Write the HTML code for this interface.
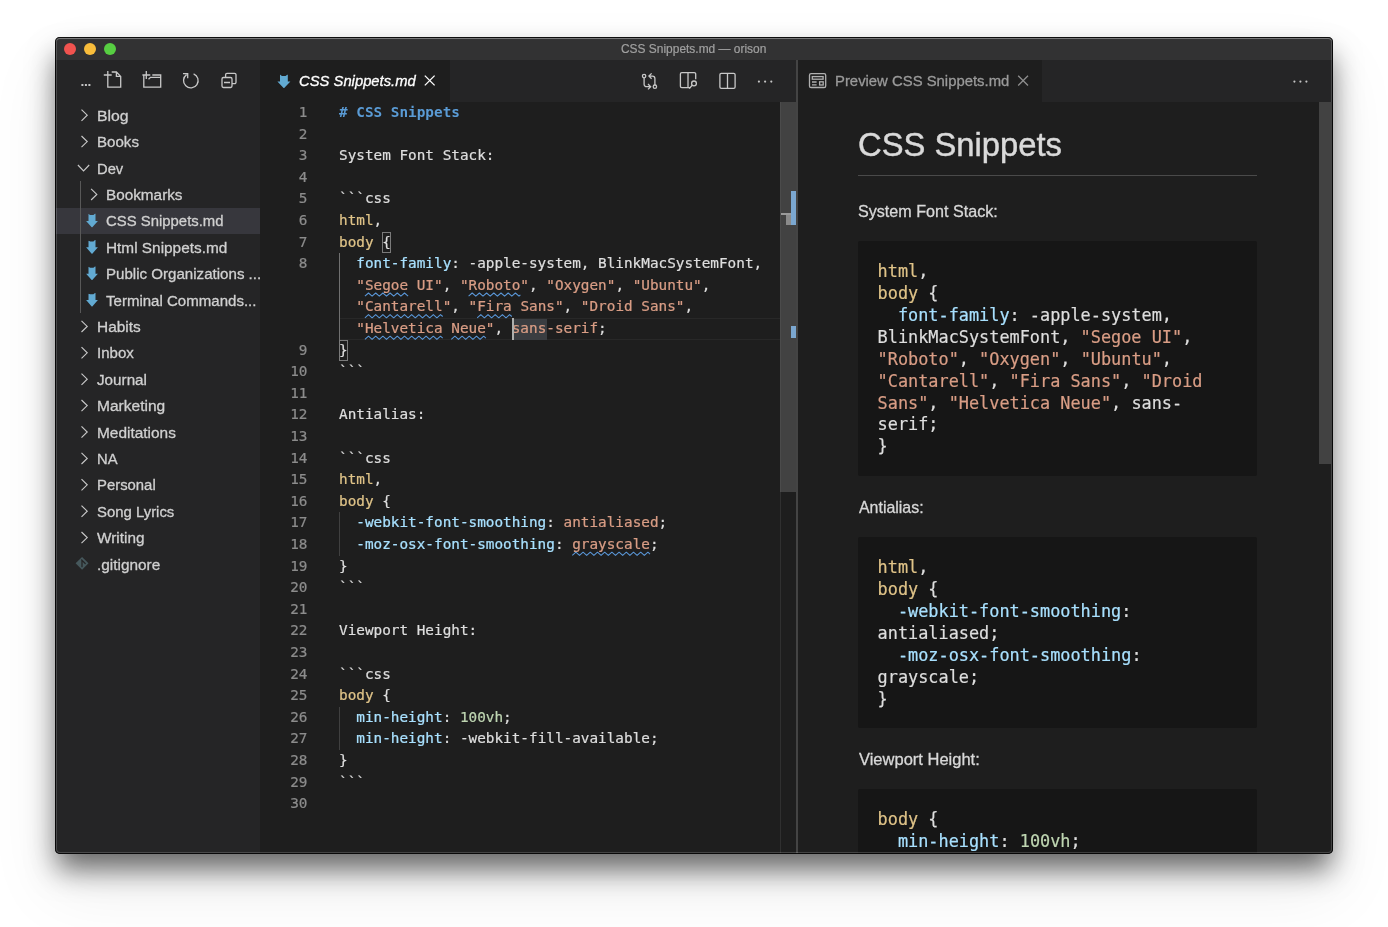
<!DOCTYPE html>
<html lang="en">
<head>
<meta charset="utf-8">
<title>CSS Snippets.md — orison</title>
<style>
*{box-sizing:border-box;margin:0;padding:0}
html,body{width:1388px;height:927px;overflow:hidden;background:#fff}
body{position:relative;font-family:"Liberation Sans",sans-serif;color:#ccc}
#win{position:absolute;left:55px;top:37px;width:1278px;height:817px;background:#1e1e1e;border-radius:5px;
 box-shadow:0 17px 29px -2px rgba(0,0,0,.58),0 33px 69px 4px rgba(0,0,0,.07);}
#clip{position:absolute;inset:0;border-radius:5px;overflow:hidden}
#o{position:absolute;left:-55px;top:-37px;width:1388px;height:927px;will-change:transform}
.a{position:absolute}
svg{position:absolute;overflow:visible}
.ui{font-size:15.2px;white-space:nowrap;line-height:26.4px;height:26.4px;color:#d0d0d0;-webkit-text-stroke:0.3px}
#titlebar{left:55px;top:37px;width:1278px;height:23px;background:#323233}
#title{left:55px;width:1278px;top:38.1px;height:23px;line-height:23px;text-align:center;font-size:12.6px;color:#a0a0a0;-webkit-text-stroke:0.2px;white-space:nowrap}
.tl{width:12.3px;height:12.3px;border-radius:50%;top:42.65px}
#sidebar{left:55px;top:60px;width:205px;height:794px;background:#252526}
#sel{left:55px;top:207.6px;width:205px;height:26.4px;background:#37373d}
#guide{left:80px;top:181px;width:1px;height:132.4px;background:#585858}
.st{fill:none;stroke:#c8c8c8;stroke-width:1.3}
#ed{left:260px;top:60px;width:537px;height:794px;background:#1e1e1e}
#tabs1{left:260px;top:60px;width:537px;height:42px;background:#252526}
#tab1{left:260px;top:60px;width:190px;height:42px;background:#1e1e1e}
#divider{left:796px;top:60px;width:2px;height:794px;background:#444}
.code{font-family:"DejaVu Sans Mono","Liberation Mono",monospace;font-size:14.35px;white-space:pre;color:#dedede;-webkit-text-stroke:0.22px;height:21.6px;line-height:21.6px}
.ln{left:260px;width:47.5px;text-align:right;color:#8c8c8c}
.cl{left:339px}
.s{color:#d99d85}.p{color:#a8e0fe}.y{color:#dfc388}.n{color:#bfd6b2}.h{color:#5a9bd5;font-weight:bold;-webkit-text-stroke:0}
.bm{width:9.6px;height:20.6px;border:1px solid #7a7a7a;margin-left:-0.5px;margin-top:-0.6px}
#pv{left:798px;top:60px;width:535px;height:794px;background:#1e1e1e}
#tabs2{left:798px;top:60px;width:535px;height:42px;background:#252526}
#tab2{left:798px;top:60px;width:244px;height:42px;background:#1e1e1e}
#pvc{left:0;top:0;width:1388px;height:854px;overflow:hidden}
#h1{font-size:33.6px;font-weight:normal;line-height:42px;height:42px;color:#dadada;-webkit-text-stroke:0.45px;white-space:nowrap;transform-origin:0 50%}
.pp{font-size:16.6px;line-height:26px;height:26px;color:#d8d8d8;-webkit-text-stroke:0.3px;white-space:nowrap;transform-origin:0 50%}
.pre{background:#161616;border-radius:2px;padding:20.8px 19.6px 19px;font-family:"DejaVu Sans Mono","Liberation Mono",monospace;font-size:16.86px;line-height:21.87px;color:#dedede;-webkit-text-stroke:0.2px;white-space:pre}
.sb{transform-origin:0 50%}
#frame{position:absolute;inset:0;border-radius:5px;pointer-events:none;box-shadow:inset 0 0 0 1px rgba(0,0,0,.88),inset 0 2px 0 0 rgba(255,255,255,.22),inset 0 0 0 2px rgba(255,255,255,.17)}
</style>
</head>
<body>
<div id="win"><div id="clip">
<div id="o">
<div id="titlebar" class="a"></div>
<div id="title" class="a"><span id="tt" style="display:inline-block;transform:scaleX(0.9487)">CSS Snippets.md — orison</span></div>
<div class="a tl" style="left:63.85px;background:#f1534f"></div>
<div class="a tl" style="left:83.9px;background:#f9bd3b"></div>
<div class="a tl" style="left:103.85px;background:#57ce42"></div>
<div id="sidebar" class="a"></div>
<div id="sel" class="a"></div>
<div id="guide" class="a"></div>
<svg class="st" style="left:0;top:0" width="1388" height="927" viewBox="0 0 1388 927">
<g fill="#c5c5c5" stroke="none"><rect x="81.4" y="84" width="2" height="2"/><rect x="84.9" y="84" width="2" height="2"/><rect x="88.4" y="84" width="2" height="2"/></g>
<path d="M103.8 75h7.9M107.8 71v8M107.8 79v8.2h12.9v-10.8l-4.3-4.4h-4.7M116.4 72v4.4h4.3"/>
<path d="M142.4 75h7.9M146.3 71v8M143.8 75.6v11.6h16.9v-12.2h-8.4M160.7 77.3h-10.2l-2 1.9"/>
<path d="M183 73.6h4.7v4.6M186.6 74.6a7.3 7.3 0 1 0 7 -0.8"/>
<rect x="222" y="77.5" width="10" height="10" rx="1.4"/><path d="M225.6 77.5v-2.8a1.4 1.4 0 0 1 1.4-1.4h7.6a1.4 1.4 0 0 1 1.4 1.4v7.6a1.4 1.4 0 0 1-1.4 1.4h-2.6M224 82.5h6"/>
<path stroke-width="1.15" d="M81.5 109.6l5.7 5.6l-5.7 5.6"/>
<path stroke-width="1.15" d="M81.5 136.0l5.7 5.6l-5.7 5.6"/>
<path stroke-width="1.15" d="M77.9 165.0l5.65 5.9l5.65-5.9"/>
<path stroke-width="1.15" d="M91.1 188.8l5.7 5.6l-5.7 5.6"/>
<path fill="#62aad2" stroke="none" d="M88.39999999999999 213.7l1.6 1.3h3.4l1.6-1.3l0.5 0v7.2h2.4l-5.6 6.4h-0.6l-5.6-6.4h2.4v-7.2z"/>
<path fill="#62aad2" stroke="none" d="M88.39999999999999 240.1l1.6 1.3h3.4l1.6-1.3l0.5 0v7.2h2.4l-5.6 6.4h-0.6l-5.6-6.4h2.4v-7.2z"/>
<path fill="#62aad2" stroke="none" d="M88.39999999999999 266.5l1.6 1.3h3.4l1.6-1.3l0.5 0v7.2h2.4l-5.6 6.4h-0.6l-5.6-6.4h2.4v-7.2z"/>
<path fill="#62aad2" stroke="none" d="M88.39999999999999 292.9l1.6 1.3h3.4l1.6-1.3l0.5 0v7.2h2.4l-5.6 6.4h-0.6l-5.6-6.4h2.4v-7.2z"/>
<path stroke-width="1.15" d="M81.5 320.8l5.7 5.6l-5.7 5.6"/>
<path stroke-width="1.15" d="M81.5 347.2l5.7 5.6l-5.7 5.6"/>
<path stroke-width="1.15" d="M81.5 373.6l5.7 5.6l-5.7 5.6"/>
<path stroke-width="1.15" d="M81.5 400.0l5.7 5.6l-5.7 5.6"/>
<path stroke-width="1.15" d="M81.5 426.4l5.7 5.6l-5.7 5.6"/>
<path stroke-width="1.15" d="M81.5 452.8l5.7 5.6l-5.7 5.6"/>
<path stroke-width="1.15" d="M81.5 479.2l5.7 5.6l-5.7 5.6"/>
<path stroke-width="1.15" d="M81.5 505.6l5.7 5.6l-5.7 5.6"/>
<path stroke-width="1.15" d="M81.5 532.0l5.7 5.6l-5.7 5.6"/>
<path fill="#46585c" stroke="none" d="M82.05 556.9l6.45 6.4l-6.45 6.4l-6.45-6.4z"/><path stroke="#252526" stroke-width="1.3" stroke-linecap="round" d="M82 560.1v6.6M81.6 559.9l3.6 3.6"/>
</svg>
<div class="a ui sb" id="sb0" style="left:96.5px;top:102.8px;transform:scaleX(1.0413)">Blog</div>
<div class="a ui sb" id="sb1" style="left:96.5px;top:129.2px;transform:scaleX(0.9942)">Books</div>
<div class="a ui sb" id="sb2" style="left:96.5px;top:155.6px;transform:scaleX(0.9718)">Dev</div>
<div class="a ui sb" id="sb3" style="left:106.4px;top:182.0px;transform:scaleX(1.0074)">Bookmarks</div>
<div class="a ui sb" id="sb4" style="left:106.4px;top:208.4px;transform:scaleX(0.9808)">CSS Snippets.md</div>
<div class="a ui sb" id="sb5" style="left:106.4px;top:234.8px;transform:scaleX(1.0120)">Html Snippets.md</div>
<div class="a ui sb" id="sb6" style="left:106.4px;top:261.2px;transform:scaleX(0.9938)">Public Organizations ...</div>
<div class="a ui sb" id="sb7" style="left:106.4px;top:287.6px;transform:scaleX(0.9902)">Terminal Commands...</div>
<div class="a ui sb" id="sb8" style="left:96.5px;top:314.0px;transform:scaleX(1.0144)">Habits</div>
<div class="a ui sb" id="sb9" style="left:96.5px;top:340.4px;transform:scaleX(0.9908)">Inbox</div>
<div class="a ui sb" id="sb10" style="left:96.5px;top:366.8px;transform:scaleX(1.0032)">Journal</div>
<div class="a ui sb" id="sb11" style="left:96.5px;top:393.2px;transform:scaleX(1.0230)">Marketing</div>
<div class="a ui sb" id="sb12" style="left:96.5px;top:419.6px;transform:scaleX(1.0153)">Meditations</div>
<div class="a ui sb" id="sb13" style="left:96.5px;top:446.0px;transform:scaleX(0.9732)">NA</div>
<div class="a ui sb" id="sb14" style="left:96.5px;top:472.4px;transform:scaleX(0.9792)">Personal</div>
<div class="a ui sb" id="sb15" style="left:96.5px;top:498.8px;transform:scaleX(0.9815)">Song Lyrics</div>
<div class="a ui sb" id="sb16" style="left:96.5px;top:525.2px;transform:scaleX(1.0108)">Writing</div>
<div class="a ui sb" id="sb17" style="left:96.5px;top:551.6px;transform:scaleX(1.0127)">.gitignore</div>
<div id="ed" class="a"></div><div id="tabs1" class="a"></div><div id="tab1" class="a"></div>
<div id="divider" class="a"></div>
<div class="a" style="left:339px;top:318.0px;width:441px;height:21.6px;border-top:1px solid #282828;border-bottom:1px solid #282828"></div>
<div class="a" style="left:512.8px;top:319.0px;width:34.6px;height:20.6px;background:#3a3d41"></div>
<div class="a" style="left:339px;top:253.2px;width:1px;height:86.4px;background:#707070"></div>
<div class="a" style="left:339px;top:512.4px;width:1px;height:43.2px;background:#404040"></div>
<div class="a" style="left:339px;top:706.8px;width:1px;height:43.2px;background:#404040"></div>
<div class="a bm" style="left:382.2px;top:232.6px"></div>
<div class="a bm" style="left:339.0px;top:340.6px"></div>
<div class="a code ln" style="top:102.0px">1</div><div class="a code cl" style="top:102.0px"><span class="h"># CSS Snippets</span></div>
<div class="a code ln" style="top:123.6px">2</div>
<div class="a code ln" style="top:145.2px">3</div><div class="a code cl" style="top:145.2px">System Font Stack:</div>
<div class="a code ln" style="top:166.8px">4</div>
<div class="a code ln" style="top:188.4px">5</div><div class="a code cl" style="top:188.4px">```css</div>
<div class="a code ln" style="top:210.0px">6</div><div class="a code cl" style="top:210.0px"><span class="y">html</span>,</div>
<div class="a code ln" style="top:231.6px">7</div><div class="a code cl" style="top:231.6px"><span class="y">body</span> {</div>
<div class="a code ln" style="top:253.2px">8</div><div class="a code cl" style="top:253.2px"><span class="p">  font-family</span>: -apple-system, BlinkMacSystemFont,</div>
<div class="a code cl" style="top:274.8px">  <span class="s">"Segoe UI"</span>, <span class="s">"Roboto"</span>, <span class="s">"Oxygen"</span>, <span class="s">"Ubuntu"</span>,</div>
<div class="a code cl" style="top:296.4px">  <span class="s">"Cantarell"</span>, <span class="s">"Fira Sans"</span>, <span class="s">"Droid Sans"</span>,</div>
<div class="a code cl" style="top:318.0px">  <span class="s">"Helvetica Neue"</span>, <span class="s">sans-serif</span>;</div>
<div class="a code ln" style="top:339.6px">9</div><div class="a code cl" style="top:339.6px">}</div>
<div class="a code ln" style="top:361.2px">10</div><div class="a code cl" style="top:361.2px">```</div>
<div class="a code ln" style="top:382.8px">11</div>
<div class="a code ln" style="top:404.4px">12</div><div class="a code cl" style="top:404.4px">Antialias:</div>
<div class="a code ln" style="top:426.0px">13</div>
<div class="a code ln" style="top:447.6px">14</div><div class="a code cl" style="top:447.6px">```css</div>
<div class="a code ln" style="top:469.2px">15</div><div class="a code cl" style="top:469.2px"><span class="y">html</span>,</div>
<div class="a code ln" style="top:490.8px">16</div><div class="a code cl" style="top:490.8px"><span class="y">body</span> {</div>
<div class="a code ln" style="top:512.4px">17</div><div class="a code cl" style="top:512.4px"><span class="p">  -webkit-font-smoothing</span>: <span class="s">antialiased</span>;</div>
<div class="a code ln" style="top:534.0px">18</div><div class="a code cl" style="top:534.0px"><span class="p">  -moz-osx-font-smoothing</span>: <span class="s">grayscale</span>;</div>
<div class="a code ln" style="top:555.6px">19</div><div class="a code cl" style="top:555.6px">}</div>
<div class="a code ln" style="top:577.2px">20</div><div class="a code cl" style="top:577.2px">```</div>
<div class="a code ln" style="top:598.8px">21</div>
<div class="a code ln" style="top:620.4px">22</div><div class="a code cl" style="top:620.4px">Viewport Height:</div>
<div class="a code ln" style="top:642.0px">23</div>
<div class="a code ln" style="top:663.6px">24</div><div class="a code cl" style="top:663.6px">```css</div>
<div class="a code ln" style="top:685.2px">25</div><div class="a code cl" style="top:685.2px"><span class="y">body</span> {</div>
<div class="a code ln" style="top:706.8px">26</div><div class="a code cl" style="top:706.8px"><span class="p">  min-height</span>: <span class="n">100vh</span>;</div>
<div class="a code ln" style="top:728.4px">27</div><div class="a code cl" style="top:728.4px"><span class="p">  min-height</span>: -webkit-fill-available;</div>
<div class="a code ln" style="top:750.0px">28</div><div class="a code cl" style="top:750.0px">}</div>
<div class="a code ln" style="top:771.6px">29</div><div class="a code cl" style="top:771.6px">```</div>
<div class="a code ln" style="top:793.2px">30</div>
<div class="a" style="left:511.8px;top:318.0px;width:2px;height:21.6px;background:#aeafad"></div>
<svg style="left:0;top:0" width="1388" height="927" viewBox="0 0 1388 927" fill="none" stroke="#5a97d8" stroke-width="1.05" stroke-linejoin="round"><path d="M364.9 296.2L368.5 293.0L372.1 296.2L375.7 293.0L379.3 296.2L382.9 293.0L386.5 296.2L390.1 293.0L393.7 296.2L397.3 293.0L400.9 296.2L404.5 293.0L408.1 296.2"/><path d="M468.6 296.2L472.2 293.0L475.8 296.2L479.4 293.0L483.0 296.2L486.6 293.0L490.2 296.2L493.8 293.0L497.4 296.2L501.0 293.0L504.6 296.2L508.2 293.0L511.8 296.2L515.4 293.0L519.0 296.2L520.4 294.9"/><path d="M364.9 317.8L368.5 314.6L372.1 317.8L375.7 314.6L379.3 317.8L382.9 314.6L386.5 317.8L390.1 314.6L393.7 317.8L397.3 314.6L400.9 317.8L404.5 314.6L408.1 317.8L411.7 314.6L415.3 317.8L418.9 314.6L422.5 317.8L426.1 314.6L429.7 317.8L433.3 314.6L436.9 317.8L440.5 314.6L442.7 316.5"/><path d="M477.2 317.8L480.8 314.6L484.4 317.8L488.0 314.6L491.6 317.8L495.2 314.6L498.8 317.8L502.4 314.6L506.0 317.8L509.6 314.6L511.8 316.5"/><path d="M364.9 339.4L368.5 336.2L372.1 339.4L375.7 336.2L379.3 339.4L382.9 336.2L386.5 339.4L390.1 336.2L393.7 339.4L397.3 336.2L400.9 339.4L404.5 336.2L408.1 339.4L411.7 336.2L415.3 339.4L418.9 336.2L422.5 339.4L426.1 336.2L429.7 339.4L433.3 336.2L436.9 339.4L440.5 336.2L442.7 338.1"/><path d="M451.3 339.4L454.9 336.2L458.5 339.4L462.1 336.2L465.7 339.4L469.3 336.2L472.9 339.4L476.5 336.2L480.1 339.4L483.7 336.2L485.9 338.1"/><path d="M572.3 555.4L575.9 552.2L579.5 555.4L583.1 552.2L586.7 555.4L590.3 552.2L593.9 555.4L597.5 552.2L601.1 555.4L604.7 552.2L608.3 555.4L611.9 552.2L615.5 555.4L619.1 552.2L622.7 555.4L626.3 552.2L629.9 555.4L633.5 552.2L637.1 555.4L640.7 552.2L644.3 555.4L647.9 552.2L650.0 554.1"/></svg>
<div class="a" style="left:780px;top:102px;width:1px;height:752px;background:#303030"></div>
<div class="a" style="left:780px;top:102px;width:16px;height:390px;background:#424242;border-left:1px solid #4b4b4b"></div>
<div class="a" style="left:791px;top:191px;width:5px;height:33.5px;background:#7ba7d0"></div>
<div class="a" style="left:786px;top:215px;width:5px;height:9.5px;background:#8a8a8a"></div>
<div class="a" style="left:781px;top:213px;width:10px;height:2px;background:#9a9a9a"></div>
<div class="a" style="left:791px;top:325.6px;width:5px;height:12.4px;background:#7ba7d0"></div>
<div id="pv" class="a"></div><div id="tabs2" class="a"></div><div id="tab2" class="a"></div>
<div id="pvc" class="a">
<h1 class="a" id="h1" style="left:858px;top:123.7px;transform:scaleX(0.9758)">CSS Snippets</h1>
<div class="a" style="left:858px;top:175px;width:399px;height:1px;background:#4a4a4a"></div>
<p class="a pp" id="p1" style="left:858.2px;top:198.9px;transform:scaleX(0.9715)">System Font Stack:</p>
<pre class="a pre" style="left:858px;top:240.5px;width:399px;height:235.2px"><span class="y">html</span>,
<span class="y">body</span> {
  <span class="p">font-family</span>: -apple-system,
BlinkMacSystemFont, <span class="s">"Segoe UI"</span>,
<span class="s">"Roboto"</span>, <span class="s">"Oxygen"</span>, <span class="s">"Ubuntu"</span>,
<span class="s">"Cantarell"</span>, <span class="s">"Fira Sans"</span>, <span class="s">"Droid</span>
<span class="s">Sans"</span>, <span class="s">"Helvetica Neue"</span>, sans-
serif;
}</pre>
<p class="a pp" id="p2" style="left:858.7px;top:494.9px;transform:scaleX(0.959)">Antialias:</p>
<pre class="a pre" style="left:858px;top:536.6px;width:399px;height:191.4px"><span class="y">html</span>,
<span class="y">body</span> {
  <span class="p">-webkit-font-smoothing</span>:
antialiased;
  <span class="p">-moz-osx-font-smoothing</span>:
grayscale;
}</pre>
<p class="a pp" id="p3" style="left:858.7px;top:746.9px;transform:scaleX(0.9942)">Viewport Height:</p>
<pre class="a pre" style="left:858px;top:788.6px;width:399px;height:120px"><span class="y">body</span> {
  <span class="p">min-height</span>: <span class="n">100vh</span>;
  <span class="p">min-height</span>: -webkit-fill-available;
}</pre>
</div>
<div class="a" style="left:1319px;top:102px;width:12px;height:362px;background:#424242"></div>
<div class="a ui sb" id="t1" style="left:299.3px;top:67.6px;color:#fff;font-style:italic;transform:scaleX(0.9741)">CSS Snippets.md</div>
<div class="a ui sb" id="t2" style="left:834.6px;top:67.8px;color:#9a9a9a;transform:scaleX(0.9785)">Preview CSS Snippets.md</div>
<svg class="st" style="left:0;top:0" width="1388" height="927" viewBox="0 0 1388 927">
<path fill="#62aad2" stroke="none" d="M280.3 74.8l1.6 1.3h3.7l1.6-1.3l0.6 0v6.6h2.6l-6.2 6.6h-0.6l-6.2-6.6h2.6v-6.6z"/>
<path stroke="#fff" d="M424.8 75.6l9.8 9.8M434.6 75.6l-9.8 9.8"/>
<path stroke="#8e8e8e" d="M1018.2 75.7l9.8 9.8M1028 75.7l-9.8 9.8"/>
<!-- git compare -->
<circle cx="644.1" cy="76.1" r="1.7"/><circle cx="654.9" cy="86.7" r="1.7"/>
<path d="M644.1 77.8v6.4a2.5 2.5 0 0 0 2.5 2.5h3.6M648 84l2.7 2.7l-2.7 2.7M654.9 85v-6.4a2.5 2.5 0 0 0 -2.5 -2.5h-3.2M651.6 73.4l-2.7 2.7l2.7 2.7"/>
<!-- open preview -->
<path d="M690.4 87.6h-8.6a1.4 1.4 0 0 1 -1.4 -1.4v-12.2a1.4 1.4 0 0 1 1.4 -1.4h12.5a1.4 1.4 0 0 1 1.4 1.4v5.2M688 72.6v15"/>
<circle cx="694" cy="83.4" r="2.4"/><path d="M692.2 85.2l-3 3.4"/>
<!-- split -->
<rect x="719.9" y="73.3" width="15.2" height="15" rx="1.4"/><path d="M727.5 73.3v15"/>
<g fill="#c5c5c5" stroke="none"><circle cx="758.9" cy="81.6" r="1.1"/><circle cx="765.1" cy="81.6" r="1.1"/><circle cx="771.3" cy="81.6" r="1.1"/>
<circle cx="1294.4" cy="81.6" r="1.1"/><circle cx="1300.4" cy="81.6" r="1.1"/><circle cx="1306.4" cy="81.6" r="1.1"/></g>
<!-- preview icon -->
<g stroke="#b0b0b0"><rect x="809.5" y="73.7" width="16.2" height="13.8" rx="1.6"/><rect x="812.3" y="76.6" width="10.8" height="2.6"/><path d="M812 82h4.6M812 84.8h4.6"/><rect x="819.6" y="81.8" width="3.6" height="3.2"/></g>
</svg>
</div>
</div><div id="frame"></div></div>
</body>
</html>
